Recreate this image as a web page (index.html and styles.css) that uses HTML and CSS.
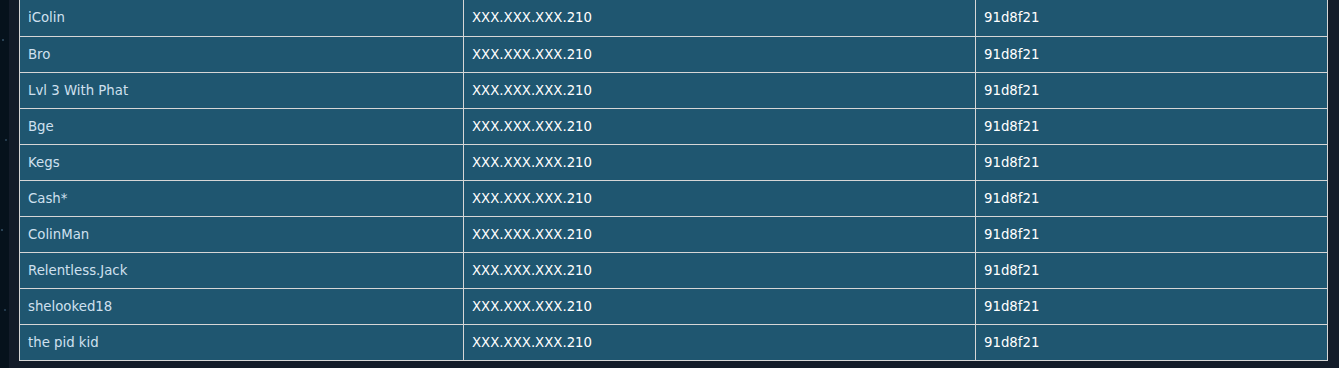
FILE: index.html
```html
<!DOCTYPE html>
<html lang="en">
<head>
    <meta charset="UTF-8">
    <meta name="viewport" content="width=device-width, initial-scale=1.0">
    <title>Player List</title>
    <link rel="stylesheet" href="styles.css">
</head>
<body>
    <div class="panel">
        <table class="players">
            <colgroup>
                <col class="col-name">
                <col class="col-ip">
                <col class="col-guid">
            </colgroup>
            <tbody>
                <tr><td class="name">iColin</td><td>XXX.XXX.XXX.210</td><td>91d8f21</td></tr>
                <tr><td class="name">Bro</td><td>XXX.XXX.XXX.210</td><td>91d8f21</td></tr>
                <tr><td class="name">Lvl 3 With Phat</td><td>XXX.XXX.XXX.210</td><td>91d8f21</td></tr>
                <tr><td class="name">Bge</td><td>XXX.XXX.XXX.210</td><td>91d8f21</td></tr>
                <tr><td class="name">Kegs</td><td>XXX.XXX.XXX.210</td><td>91d8f21</td></tr>
                <tr><td class="name">Cash*</td><td>XXX.XXX.XXX.210</td><td>91d8f21</td></tr>
                <tr><td class="name">ColinMan</td><td>XXX.XXX.XXX.210</td><td>91d8f21</td></tr>
                <tr><td class="name">Relentless.Jack</td><td>XXX.XXX.XXX.210</td><td>91d8f21</td></tr>
                <tr><td class="name">shelooked18</td><td>XXX.XXX.XXX.210</td><td>91d8f21</td></tr>
                <tr><td class="name">the pid kid</td><td>XXX.XXX.XXX.210</td><td>91d8f21</td></tr>
            </tbody>
        </table>
    </div>
</body>
</html>
```

FILE: styles.css
```css
body {
    margin: 0;
    padding: 0;
    font-family: 'DejaVu Sans', Verdana, sans-serif;
    background-color: #06121c;
    /* a few faint stars on the page backdrop */
    background-image:
        radial-gradient(circle at 3px 40px, #2a4254 0.8px, transparent 1.2px),
        radial-gradient(circle at 6px 140px, #24394a 0.8px, transparent 1.2px),
        radial-gradient(circle at 2px 230px, #2a4254 0.8px, transparent 1.2px),
        radial-gradient(circle at 5px 310px, #22384a 0.8px, transparent 1.2px);
    overflow: hidden;
}

.panel {
    margin-left: 9px;
    padding: 0 11px 0 10px;
    background-color: #131c29;
    min-height: 370px;
}

.players {
    width: 1308px;
    border-collapse: collapse;
    table-layout: fixed;
    background-color: #1f5670;
}

.col-name { width: 444px; }
.col-ip { width: 512px; }
.col-guid { width: 352px; }

.players tr:first-child td {
    border-top: none;
}

.players td {
    height: 36px;
    padding: 0 8px;
    border: 1px solid #d6d6d6;
    color: #ffffff;
    font-size: 13.3px;
    vertical-align: middle;
    box-sizing: border-box;
}

.players td.name {
    color: #cfe0ef;
}
```
